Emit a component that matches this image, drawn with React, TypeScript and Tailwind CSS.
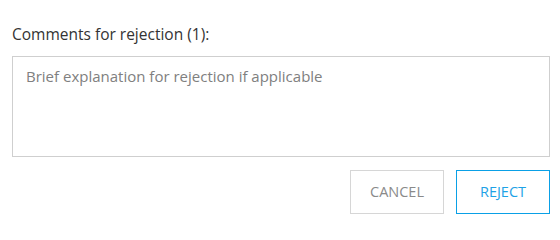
export default function App() {
  return (
    <div className="w-[560px] h-[226px] bg-white pl-3 pr-[10px] pt-[24px] font-['Segoe_UI','Open_Sans',sans-serif]">
      <label className="block text-[15.5px] leading-5 text-[#333]">Comments for rejection (1):</label>
      <textarea
        placeholder="Brief explanation for rejection if applicable"
        className="mt-[12px] block w-[538px] h-[101px] resize-none border border-[#cfcfcf] px-[13px] pt-[9px] pb-2 text-[15px] leading-5 text-[#333] placeholder:text-[#808080] outline-none"
      />
      <div className="mt-[13px] flex justify-end gap-3">
        <button className="w-[94px] h-[44px] border border-[#d6d6d6] bg-white text-[14.5px] text-[#8a8a8a]">CANCEL</button>
        <button className="w-[94px] h-[44px] border border-[#0aa0e6] bg-white text-[14.5px] text-[#1ea2e6]">REJECT</button>
      </div>
    </div>
  );
}
